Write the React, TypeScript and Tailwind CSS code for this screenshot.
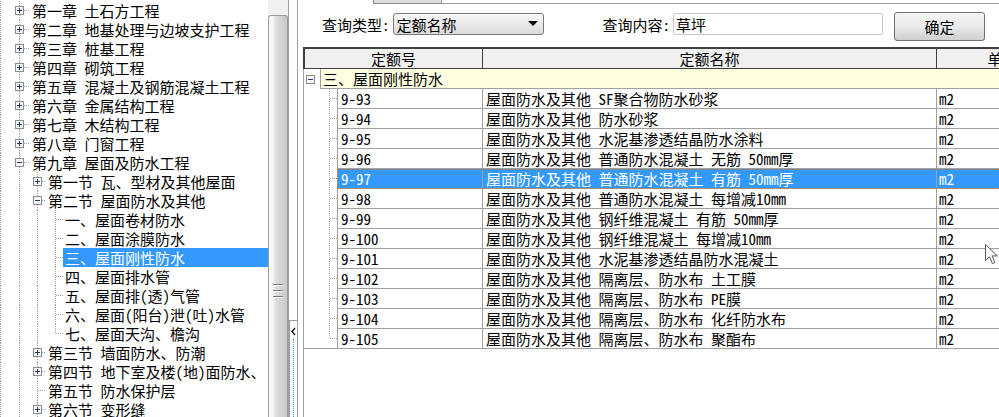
import React from 'react';

type TreeRow = { level: 0 | 1 | 2; label: string; kind: 'plus' | 'minus' | 'leaf'; sel?: boolean };

const tree: TreeRow[] = [
  { level: 0, label: '第一章 土石方工程', kind: 'plus' },
  { level: 0, label: '第二章 地基处理与边坡支护工程', kind: 'plus' },
  { level: 0, label: '第三章 桩基工程', kind: 'plus' },
  { level: 0, label: '第四章 砌筑工程', kind: 'plus' },
  { level: 0, label: '第五章 混凝土及钢筋混凝土工程', kind: 'plus' },
  { level: 0, label: '第六章 金属结构工程', kind: 'plus' },
  { level: 0, label: '第七章 木结构工程', kind: 'plus' },
  { level: 0, label: '第八章 门窗工程', kind: 'plus' },
  { level: 0, label: '第九章 屋面及防水工程', kind: 'minus' },
  { level: 1, label: '第一节 瓦、型材及其他屋面', kind: 'plus' },
  { level: 1, label: '第二节 屋面防水及其他', kind: 'minus' },
  { level: 2, label: '一、屋面卷材防水', kind: 'leaf' },
  { level: 2, label: '二、屋面涂膜防水', kind: 'leaf' },
  { level: 2, label: '三、屋面刚性防水', kind: 'leaf', sel: true },
  { level: 2, label: '四、屋面排水管', kind: 'leaf' },
  { level: 2, label: '五、屋面排(透)气管', kind: 'leaf' },
  { level: 2, label: '六、屋面(阳台)泄(吐)水管', kind: 'leaf' },
  { level: 2, label: '七、屋面天沟、檐沟', kind: 'leaf' },
  { level: 1, label: '第三节 墙面防水、防潮', kind: 'plus' },
  { level: 1, label: '第四节 地下室及楼(地)面防水、', kind: 'plus' },
  { level: 1, label: '第五节 防水保护层', kind: 'leaf' },
  { level: 1, label: '第六节 变形缝', kind: 'plus' },
];

const items: [string, string][] = [
  ['9-93', '屋面防水及其他 SF聚合物防水砂浆'],
  ['9-94', '屋面防水及其他 防水砂浆'],
  ['9-95', '屋面防水及其他 水泥基渗透结晶防水涂料'],
  ['9-96', '屋面防水及其他 普通防水混凝土 无筋 50mm厚'],
  ['9-97', '屋面防水及其他 普通防水混凝土 有筋 50mm厚'],
  ['9-98', '屋面防水及其他 普通防水混凝土 每增减10mm'],
  ['9-99', '屋面防水及其他 钢纤维混凝土 有筋 50mm厚'],
  ['9-100', '屋面防水及其他 钢纤维混凝土 每增减10mm'],
  ['9-101', '屋面防水及其他 水泥基渗透结晶防水混凝土'],
  ['9-102', '屋面防水及其他 隔离层、防水布 土工膜'],
  ['9-103', '屋面防水及其他 隔离层、防水布 PE膜'],
  ['9-104', '屋面防水及其他 隔离层、防水布 化纤防水布'],
  ['9-105', '屋面防水及其他 隔离层、防水布 聚酯布'],
];

const DOT = '#a0a0a0';

function Box({ x, y, minus }: { x: number; y: number; minus?: boolean }) {
  const cx = x + 4.5;
  const cy = y + 4.5;
  return (
    <g shapeRendering="crispEdges">
      <rect x={x + 0.5} y={y + 0.5} width={8} height={8} fill="#f6f6f6" stroke="#8c8c8c" />
      <line x1={x + 2} x2={x + 7} y1={cy} y2={cy} stroke="#23397a" />
      {!minus && <line x1={cx} x2={cx} y1={y + 2} y2={y + 7} stroke="#23397a" />}
    </g>
  );
}

function VLine({ x, y1, y2 }: { x: number; y1: number; y2: number }) {
  return <line x1={x} x2={x} y1={y1} y2={y2} stroke={DOT} strokeDasharray="1 1" shapeRendering="crispEdges" />;
}
function HLine({ x1, x2, y }: { x1: number; x2: number; y: number }) {
  return <line x1={x1} x2={x2} y1={y} y2={y} stroke={DOT} strokeDasharray="1 1" shapeRendering="crispEdges" />;
}

function TreeLines({ row, idx }: { row: TreeRow; idx: number }) {
  const w = row.level === 0 ? 30 : row.level === 1 ? 46 : 63;
  const cy = 9.5;
  return (
    <svg width={w} height={19} className="shrink-0 block">
      <VLine x={0.5} y1={0} y2={19} />
      <VLine x={19.5} y1={0} y2={19} />
      {idx >= 9 && <VLine x={37.5} y1={0} y2={19} />}
      {idx >= 11 && idx <= 17 && <VLine x={55.5} y1={0} y2={idx === 17 ? cy : 19} />}
      {row.level === 0 && (
        <>
          <HLine x1={24} x2={30} y={cy} />
          <Box x={15} y={5} minus={row.kind === 'minus'} />
        </>
      )}
      {row.level === 1 && row.kind !== 'leaf' && (
        <>
          <HLine x1={42} x2={46} y={cy} />
          <Box x={33} y={5} minus={row.kind === 'minus'} />
        </>
      )}
      {row.level === 1 && row.kind === 'leaf' && <HLine x1={38} x2={46} y={cy} />}
      {row.level === 2 && <HLine x1={56} x2={63} y={cy} />}
    </svg>
  );
}

export default function App() {
  return (
    <div className="relative w-[999px] h-[417px] overflow-hidden bg-white flex text-[15px] leading-[19px] text-black font-['Noto_Sans_Mono_CJK_SC','Noto_Sans_CJK_SC',sans-serif]">
      {/* Tree */}
      <div className="w-[268px] h-full shrink-0 overflow-hidden bg-white pt-[1px] flex flex-col">
        {tree.map((r, i) => (
          <div key={i} className="h-[19px] flex items-stretch shrink-0">
            <TreeLines row={r} idx={i} />
            <div
              className={`flex-1 pl-[2px] whitespace-nowrap overflow-hidden ${
                r.sel ? 'bg-[#3399ff] text-white' : ''
              }`}
            >
              {r.label}
            </div>
          </div>
        ))}
      </div>

      {/* Scrollbar */}
      <div className="w-[21px] h-full shrink-0 bg-[#f0f0f0] border-r border-[#a0a0a0] flex flex-col">
        <div className="h-[15px] shrink-0" />
        <div className="flex-1 rounded-t-[3px] border border-b-0 border-[#9c9c9c] bg-gradient-to-r from-[#f7f7f7] from-[20%] via-[#dcdcdc] via-[40%] to-[#c9c9c9] flex flex-col">
          <div className="h-[268px] shrink-0" />
          <div className="ml-[4px] w-[10px] flex flex-col gap-[2px]">
            <div className="h-[1px] bg-[#7d7d7d] shadow-[0_1px_0_#ffffff]" />
            <div className="h-[1px]" />
            <div className="h-[1px] bg-[#7d7d7d] shadow-[0_1px_0_#ffffff]" />
            <div className="h-[1px]" />
            <div className="h-[1px] bg-[#7d7d7d] shadow-[0_1px_0_#ffffff]" />
          </div>
        </div>
      </div>

      {/* Splitter */}
      <div className="w-[9px] h-full shrink-0 bg-white border-r border-[#a0a0a0] flex flex-col">
        <div className="h-[320px] shrink-0" />
        <div className="flex-1 border-t border-l border-[#a0a0a0] flex flex-col items-center">
          <svg width={7} height={10} className="mt-[6px] block shrink-0">
            <path d="M5 1 L2 4.5 L5 8" fill="none" stroke="#000" strokeWidth={1.3} />
          </svg>
          <div className="flex-1 mt-[2px] border-l border-dotted border-[#3399ff]" />
        </div>
      </div>

      {/* Right panel */}
      <div className="flex-1 h-full overflow-hidden flex flex-col">
        {/* top strip */}
        <div className="h-[4px] flex shrink-0">
          <div className="w-[75px]" />
          <div className="w-[69px] bg-[#dedede] border-x border-b border-[#8c8c8c]" />
          <div className="flex-1 border-b border-[#a0a0a0]" />
        </div>

        {/* query bar */}
        <div className="h-[43px] shrink-0 flex items-start pt-[9px] pl-[24px]">
          <div className="h-[22px] flex items-center whitespace-nowrap">查询类型:</div>
          <div className="ml-[3px] w-[151px] h-[22px] rounded-[3px] border border-[#7a7a7a] bg-gradient-to-b from-[#f7f7f7] to-[#dcdcdc] flex items-center pl-[3px] pr-[5px]">
            <span className="flex-1">定额名称</span>
            <svg width={10} height={6} className="block">
              <path d="M0 0 L10 0 L5 5 Z" fill="#000" />
            </svg>
          </div>
          <div className="ml-[59px] h-[22px] flex items-center whitespace-nowrap">查询内容:</div>
          <div className="ml-[3px] w-[210px] h-[22px] rounded-[2px] border border-[#c8c8c8] bg-white flex items-center pl-[2px]">
            草坪
          </div>
          <div className="ml-[11px] -mt-[1px] w-[91px] h-[29px] rounded-[3px] border border-[#707070] bg-gradient-to-b from-[#f4f4f4] via-[#ebebeb] to-[#cfcfcf] flex items-center justify-center">
            确定
          </div>
        </div>

        {/* table */}
        <div className="flex-1 ml-[5px] flex flex-col w-max">
          <div className="h-[22px] shrink-0 flex bg-[#f0f0f0] border-t-2 border-b border-[#404040]">
            <div className="w-[180px] shrink-0 border-l-2 border-r border-[#404040] text-center">定额号</div>
            <div className="w-[454px] shrink-0 border-r border-[#404040] text-center">定额名称</div>
            <div className="w-[132px] shrink-0 border-r border-[#404040] text-center">单位</div>
          </div>
          <div className="flex-1 border-l border-[#a0a0a0] flex flex-col">
            {/* group row */}
            <div className="h-[20px] shrink-0 flex">
              <svg width={16} height={20} className="block shrink-0">
                <Box x={2} y={6} minus />
              </svg>
              <div className="flex-1 bg-[#ffffe1] border-l border-b border-[#a0a0a0] pl-[2px] whitespace-nowrap">
                三、屋面刚性防水
              </div>
            </div>
            {/* data rows */}
            <div className="shrink-0 border-b border-[#a0a0a0] flex flex-col">
              {items.map(([code, name], i) => {
                const last = i === items.length - 1;
                const sel = code === '9-97';
                return (
                  <div key={code} className={`flex shrink-0 ${last ? 'h-[19px]' : 'h-[20px]'}`}>
                    <svg width={33} height={last ? 19 : 20} className="block shrink-0">
                      <VLine x={25.5} y1={0} y2={last ? 9.5 : 20} />
                      <HLine x1={26} x2={33} y={9.5} />
                    </svg>
                    <div
                      className={`flex border-l border-[#a0a0a0] whitespace-nowrap ${last ? '' : 'border-b'} ${
                        sel
                          ? 'bg-[#3399ff] text-white outline-1 outline-dotted outline-[#c0782c] -outline-offset-1'
                          : ''
                      }`}
                    >
                      <div className="w-[145px] shrink-0 border-r border-[#a0a0a0] pl-[3px]">{code}</div>
                      <div className="w-[454px] shrink-0 border-r border-[#a0a0a0] pl-[3px]">{name}</div>
                      <div className="w-[132px] shrink-0 pl-[2px]">m2</div>
                    </div>
                  </div>
                );
              })}
            </div>
            <div className="flex-1" />
          </div>
        </div>
      </div>

      {/* mouse cursor */}
      <svg width={14} height={22} className="absolute left-[985px] top-[244px]">
        <path
          d="M0.5 0.5 L0.5 16.5 L4.5 12.8 L7.3 19.5 L9.8 18.4 L7.1 11.9 L12.3 11.9 Z"
          fill="#ffffff"
          stroke="#555555"
          strokeLinejoin="round"
        />
      </svg>
    </div>
  );
}
